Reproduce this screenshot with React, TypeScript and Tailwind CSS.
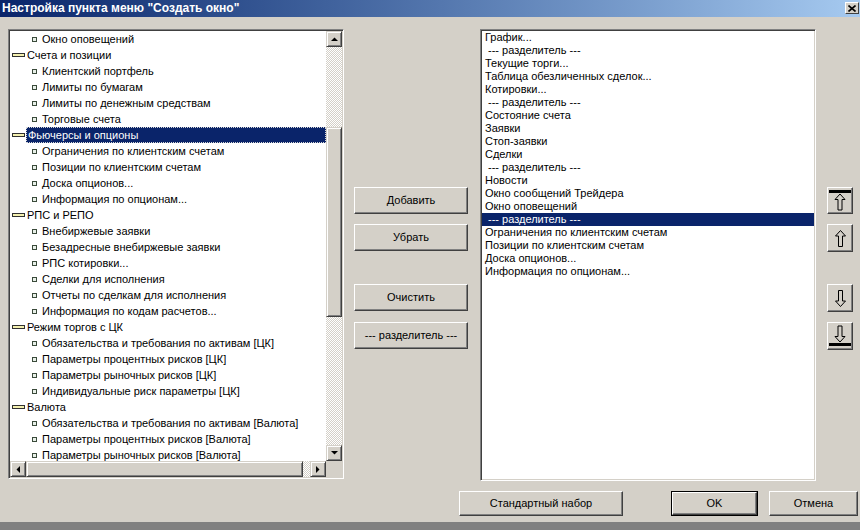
import clsx from "clsx";

const treeRows: { kind: "group" | "item"; label: string; selected?: boolean }[] = [
  { kind: "item", label: "Окно оповещений" },
  { kind: "group", label: "Счета и позиции" },
  { kind: "item", label: "Клиентский портфель" },
  { kind: "item", label: "Лимиты по бумагам" },
  { kind: "item", label: "Лимиты по денежным средствам" },
  { kind: "item", label: "Торговые счета" },
  { kind: "group", label: "Фьючерсы и опционы", selected: true },
  { kind: "item", label: "Ограничения по клиентским счетам" },
  { kind: "item", label: "Позиции по клиентским счетам" },
  { kind: "item", label: "Доска опционов..." },
  { kind: "item", label: "Информация по опционам..." },
  { kind: "group", label: "РПС и РЕПО" },
  { kind: "item", label: "Внебиржевые заявки" },
  { kind: "item", label: "Безадресные внебиржевые заявки" },
  { kind: "item", label: "РПС котировки..." },
  { kind: "item", label: "Сделки для исполнения" },
  { kind: "item", label: "Отчеты по сделкам для исполнения" },
  { kind: "item", label: "Информация по кодам расчетов..." },
  { kind: "group", label: "Режим торгов с ЦК" },
  { kind: "item", label: "Обязательства и требования по активам [ЦК]" },
  { kind: "item", label: "Параметры процентных рисков [ЦК]" },
  { kind: "item", label: "Параметры рыночных рисков [ЦК]" },
  { kind: "item", label: "Индивидуальные риск параметры [ЦК]" },
  { kind: "group", label: "Валюта" },
  { kind: "item", label: "Обязательства и требования по активам [Валюта]" },
  { kind: "item", label: "Параметры процентных рисков [Валюта]" },
  { kind: "item", label: "Параметры рыночных рисков [Валюта]" },
];

const SEP = "--- разделитель ---";

const menuRows = [
  "График...",
  SEP,
  "Текущие торги...",
  "Таблица обезличенных сделок...",
  "Котировки...",
  SEP,
  "Состояние счета",
  "Заявки",
  "Стоп-заявки",
  "Сделки",
  SEP,
  "Новости",
  "Окно сообщений Трейдера",
  "Окно оповещений",
  SEP,
  "Ограничения по клиентским счетам",
  "Позиции по клиентским счетам",
  "Доска опционов...",
  "Информация по опционам...",
];

const raised =
  "bg-[#d4d0c8] border border-t-white border-l-white border-r-[#404040] border-b-[#404040] shadow-[inset_-1px_-1px_0_#808080]";

const sunken =
  "border border-t-[#808080] border-l-[#808080] border-r-white border-b-white shadow-[inset_1px_1px_0_#404040,inset_-1px_-1px_0_#d4d0c8] p-px";

const dither =
  "[background-image:repeating-conic-gradient(#ffffff_0_25%,#d4d0c8_0_50%)] [background-size:2px_2px]";

function Button({ children, className }: { children: React.ReactNode; className?: string }) {
  return (
    <div className={clsx(raised, "flex items-center justify-center text-[11px] text-black", className)}>
      {children}
    </div>
  );
}

function ScrollBtn({ dir }: { dir: "up" | "down" | "left" | "right" }) {
  const pts = {
    up: "0,4 7,4 3.5,0.5",
    down: "0,0 7,0 3.5,3.5",
    left: "4,0 4,7 0.5,3.5",
    right: "0,0 0,7 3.5,3.5",
  }[dir];
  const vertical = dir === "up" || dir === "down";
  return (
    <div
      className={clsx(
        "flex h-[16px] w-[16px] shrink-0 items-center justify-center bg-[#d4d0c8] border border-t-[#d4d0c8] border-l-[#d4d0c8] border-r-[#404040] border-b-[#404040] shadow-[inset_1px_1px_0_#ffffff,inset_-1px_-1px_0_#808080]"
      )}
    >
      <svg width={vertical ? 7 : 4} height={vertical ? 4 : 7} viewBox={vertical ? "0 0 7 4" : "0 0 4 7"}>
        <polygon points={pts} fill="#000" />
      </svg>
    </div>
  );
}

function Thumb({ className }: { className?: string }) {
  return (
    <div
      className={clsx(
        "bg-[#d4d0c8] border border-t-[#d4d0c8] border-l-[#d4d0c8] border-r-[#404040] border-b-[#404040] shadow-[inset_1px_1px_0_#ffffff,inset_-1px_-1px_0_#808080]",
        className
      )}
    />
  );
}

function ArrowIcon({ dir, bar }: { dir: "up" | "down"; bar?: boolean }) {
  const up = "5.5,0.5 10.5,6 7.5,6 7.5,16.5 3.5,16.5 3.5,6 0.5,6";
  const down = "5.5,16.5 10.5,11 7.5,11 7.5,0.5 3.5,0.5 3.5,11 0.5,11";
  if (bar) {
    return (
      <svg width="22" height="21" viewBox="0 0 22 21">
        {dir === "up" ? (
          <>
            <rect x="0" y="0" width="22" height="3" fill="#000" />
            <polygon points={up} fill="none" stroke="#000" strokeWidth="1" transform="translate(5.5,3.5)" />
          </>
        ) : (
          <>
            <polygon points={down} fill="none" stroke="#000" strokeWidth="1" transform="translate(5.5,0.5)" />
            <rect x="0" y="18" width="22" height="3" fill="#000" />
          </>
        )}
      </svg>
    );
  }
  return (
    <svg width="11" height="17" viewBox="0 0 11 17">
      <polygon points={dir === "up" ? up : down} fill="none" stroke="#000" strokeWidth="1" />
    </svg>
  );
}

function TreePanel() {
  return (
    <div className={clsx(sunken, "flex h-[450px] w-[336px] shrink-0 flex-col bg-white")}>
      <div className="flex min-h-0 flex-1">
        <div className="min-w-0 flex-1 overflow-hidden bg-white">
          {treeRows.map((r, i) =>
            r.kind === "group" ? (
              <div key={i} className="flex h-[16px] items-center">
                <div className="ml-[2px] h-[4px] w-[13px] shrink-0 border border-[#303030] bg-[#f4f0b0]" />
                <div
                  className={clsx(
                    "ml-px flex h-[16px] items-center whitespace-nowrap pl-px pr-[2px] leading-[16px]",
                    r.selected
                      ? "flex-1 border border-dotted border-[#d8d8d8] bg-[#0a246a] text-white"
                      : "text-black"
                  )}
                >
                  {r.label}
                </div>
              </div>
            ) : (
              <div key={i} className="flex h-[16px] items-center whitespace-nowrap text-black">
                <div className="ml-[22px] mr-[5px] h-[5px] w-[5px] shrink-0 border border-[#3a4a3a] bg-[#e8f0e8]" />
                <span className="leading-[16px]">{r.label}</span>
              </div>
            )
          )}
        </div>
        <div className="flex w-[16px] shrink-0 flex-col">
          <ScrollBtn dir="up" />
          <div className={clsx(dither, "h-[80px] shrink-0")} />
          <Thumb className="h-[190px] shrink-0" />
          <div className={clsx(dither, "flex-1")} />
          <ScrollBtn dir="down" />
        </div>
      </div>
      <div className="flex h-[16px] shrink-0">
        <ScrollBtn dir="left" />
        <Thumb className="w-[277px] shrink-0" />
        <div className={clsx(dither, "flex-1")} />
        <ScrollBtn dir="right" />
        <div className="w-[16px] shrink-0 bg-[#d4d0c8]" />
      </div>
    </div>
  );
}

function MenuList() {
  return (
    <div className={clsx(sunken, "h-[452px] w-[336px] shrink-0 bg-white")}>
      <div className="h-full overflow-hidden bg-white">
        {menuRows.map((label, i) => {
          const sel = i === 14;
          return (
            <div
              key={i}
              className={clsx(
                "h-[13px] whitespace-nowrap leading-[13px]",
                label === SEP ? "pl-[6px]" : "pl-[3px]",
                sel ? "bg-[#0a246a] text-white" : "text-black"
              )}
            >
              {label}
            </div>
          );
        })}
      </div>
    </div>
  );
}

export default function App() {
  return (
    <div className="flex h-[530px] w-[860px] flex-col overflow-hidden bg-[#d4d0c8] font-['Liberation_Sans',Arial,sans-serif] text-[11px]">
      <div className="relative flex h-[17px] shrink-0 items-center bg-linear-to-r from-[#0a246a] to-[#a6caf0] pl-[2px]">
        <span className="text-[12px] font-bold leading-[17px] text-white">
          Настройка пункта меню "Создать окно"
        </span>
        <div className="absolute right-[1px] top-[2px] flex h-[12px] w-[14px] items-center justify-center bg-[#d4d0c8] border border-t-white border-l-white border-r-[#404040] border-b-[#404040]">
          <svg width="8" height="7" viewBox="0 0 8 7">
            <path d="M0.5 0.5 L7.5 6.5 M7.5 0.5 L0.5 6.5" stroke="#000" strokeWidth="1.6" />
          </svg>
        </div>
      </div>

      <div className="flex items-start pl-[8px] pt-[12px]">
        <TreePanel />
        <div className="ml-[10px] flex w-[114px] shrink-0 flex-col pt-[158px]">
          <Button className="h-[27px]">Добавить</Button>
          <Button className="mt-[10px] h-[27px]">Убрать</Button>
          <Button className="mt-[33px] h-[27px]">Очистить</Button>
          <Button className="mt-[11px] h-[27px]">--- разделитель ---</Button>
        </div>
        <div className="ml-[12px]">
          <MenuList />
        </div>
        <div className="ml-[11px] flex w-[26px] shrink-0 flex-col pt-[158px]">
          <Button className="h-[27px] items-start pt-[2px]">
            <ArrowIcon dir="up" bar />
          </Button>
          <Button className="mt-[10px] h-[28px]">
            <ArrowIcon dir="up" />
          </Button>
          <Button className="mt-[32px] h-[28px]">
            <ArrowIcon dir="down" />
          </Button>
          <Button className="mt-[10px] h-[28px] items-end pb-[3px]">
            <ArrowIcon dir="down" bar />
          </Button>
        </div>
      </div>

      <div className="mt-[10px] flex h-[25px] shrink-0">
        <Button className="ml-[459px] w-[164px]">Стандартный набор</Button>
        <div className="ml-[48px] w-[87px] border border-black">
          <Button className="h-full w-full">OK</Button>
        </div>
        <Button className="ml-[11px] w-[89px]">Отмена</Button>
      </div>

      <div className="mt-auto h-[8px] shrink-0 bg-[#808080]" />
    </div>
  );
}
